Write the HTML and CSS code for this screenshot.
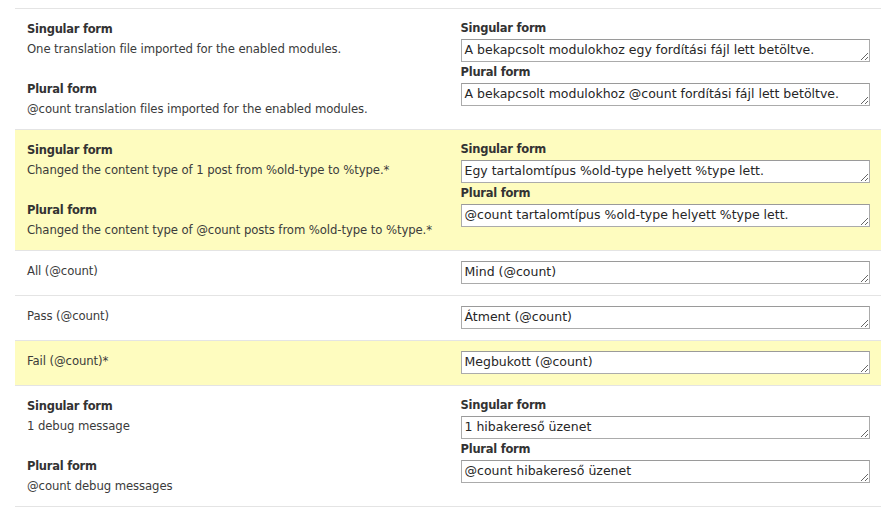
FILE: index.html
```html
<!DOCTYPE html>
<html lang="en">
<head>
<meta charset="utf-8">
<title>Translations</title>
<link rel="stylesheet" href="styles.css">
</head>
<body>
<table class="strings">
  <tbody>
    <tr>
      <td class="source">
        <div class="form-label">Singular form</div>
        <div class="form-text">One translation file imported for the enabled modules.</div>
        <div class="form-label gap">Plural form</div>
        <div class="form-text">@count translation files imported for the enabled modules.</div>
      </td>
      <td class="target">
        <div class="form-label">Singular form</div>
        <textarea class="field" rows="1">A bekapcsolt modulokhoz egy fordítási fájl lett betöltve.</textarea>
        <div class="form-label">Plural form</div>
        <textarea class="field" rows="1">A bekapcsolt modulokhoz @count fordítási fájl lett betöltve.</textarea>
      </td>
    </tr>
    <tr class="changed">
      <td class="source">
        <div class="form-label">Singular form</div>
        <div class="form-text">Changed the content type of 1 post from %old-type to %type.*</div>
        <div class="form-label gap">Plural form</div>
        <div class="form-text">Changed the content type of @count posts from %old-type to %type.*</div>
      </td>
      <td class="target">
        <div class="form-label">Singular form</div>
        <textarea class="field" rows="1">Egy tartalomtípus %old-type helyett %type lett.</textarea>
        <div class="form-label">Plural form</div>
        <textarea class="field" rows="1">@count tartalomtípus %old-type helyett %type lett.</textarea>
      </td>
    </tr>
    <tr>
      <td class="source"><div class="form-text">All (@count)</div></td>
      <td class="target"><textarea class="field" rows="1">Mind (@count)</textarea></td>
    </tr>
    <tr>
      <td class="source"><div class="form-text">Pass (@count)</div></td>
      <td class="target"><textarea class="field" rows="1">Átment (@count)</textarea></td>
    </tr>
    <tr class="changed">
      <td class="source"><div class="form-text">Fail (@count)*</div></td>
      <td class="target"><textarea class="field" rows="1" spellcheck="true">Megbukott (@count)</textarea></td>
    </tr>
    <tr>
      <td class="source">
        <div class="form-label">Singular form</div>
        <div class="form-text">1 debug message</div>
        <div class="form-label gap">Plural form</div>
        <div class="form-text">@count debug messages</div>
      </td>
      <td class="target">
        <div class="form-label">Singular form</div>
        <textarea class="field" rows="1">1 hibakereső üzenet</textarea>
        <div class="form-label">Plural form</div>
        <textarea class="field" rows="1">@count hibakereső üzenet</textarea>
      </td>
    </tr>
  </tbody>
</table>
</body>
</html>
```

FILE: styles.css
```css
html, body {
  margin: 0;
  padding: 0;
  background: #ffffff;
}

body {
  padding: 8px 7px 0 15px;
  font-family: "DejaVu Sans", "Lucida Grande", Verdana, sans-serif;
  font-size: 11.7px;
  color: #3b3b3b;
}

.strings {
  width: 866px;
  border-collapse: collapse;
  table-layout: fixed;
}

.strings tr {
  border-top: 1px solid #e4e4e4;
  border-bottom: 1px solid #e4e4e4;
}

.strings tr.changed {
  background: #fefcbf;
}

.strings td {
  width: 50%;
  vertical-align: top;
  padding: 9px 12px 11px 12px;
}

.strings td.source {
  padding-top: 10px;
  padding-bottom: 10px;
}

.strings td.target {
  padding-left: 13px;
}

.form-label {
  font-size: 11.5px;
  font-weight: bold;
  letter-spacing: -0.25px;
  line-height: 20px;
  color: #333333;
}

.form-text {
  line-height: 20px;
  letter-spacing: -0.1px;
  white-space: nowrap;
}

.form-label.gap {
  margin-top: 20px;
}

.field {
  display: block;
  box-sizing: border-box;
  width: 409px;
  height: 23px;
  margin: 1px 0 0 0;
  padding: 2px 3px;
  border: 1px solid #ababab;
  border-top-color: #9a9a9a;
  background: #ffffff;
  font-family: "DejaVu Sans", "Lucida Grande", Verdana, sans-serif;
  font-size: 12.5px;
  line-height: 16px;
  color: #262626;
  resize: vertical;
  overflow: hidden;
}
```
